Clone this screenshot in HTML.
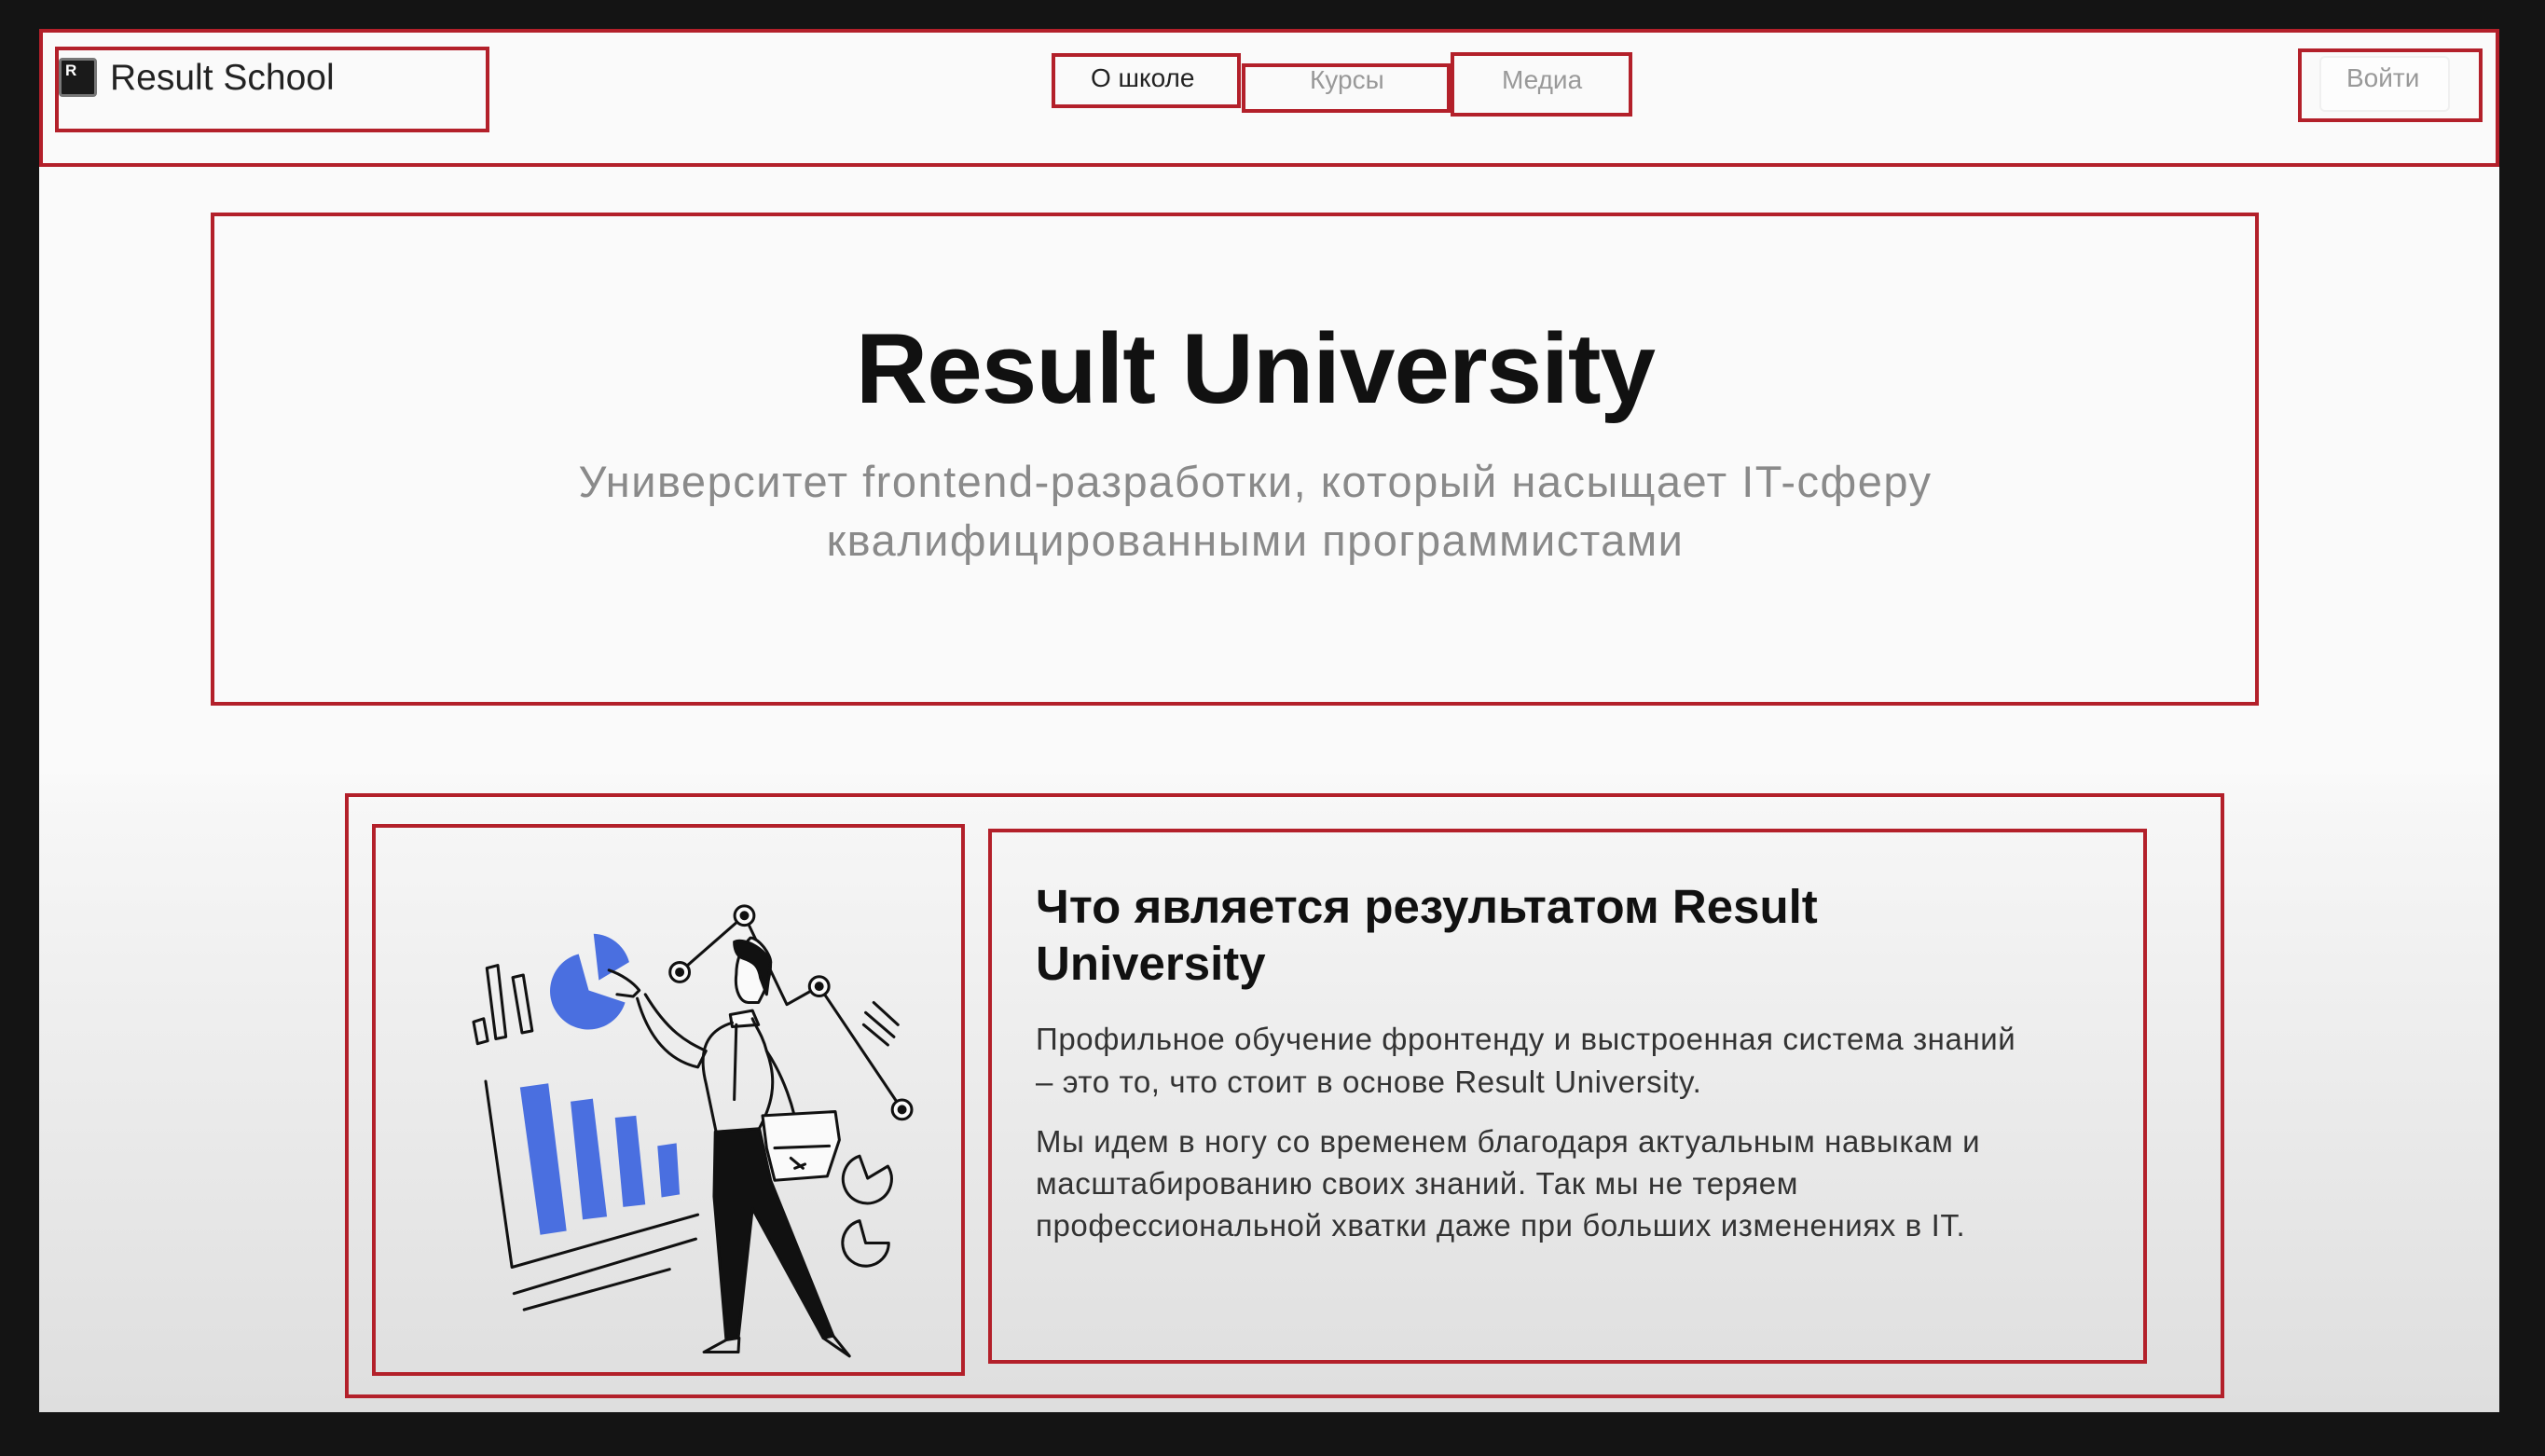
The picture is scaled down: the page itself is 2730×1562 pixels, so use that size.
<!DOCTYPE html>
<html><head><meta charset="utf-8">
<style>
*{margin:0;padding:0;box-sizing:border-box}
html,body{width:2730px;height:1562px;overflow:hidden;background:#141414;font-family:"Liberation Sans","Noto Sans CJK SC",sans-serif}
.page{position:absolute;left:42px;top:31px;width:2639px;height:1484px;background:linear-gradient(#fafafa 0,#fafafa 790px,#f6f6f6 850px,#dedede 1484px)}
.b{position:absolute;border:4px solid #b3202a}
.t{position:absolute;white-space:nowrap}
</style></head><body>
<div class="page"></div>
<!-- header -->
<div class="b" style="left:42px;top:31px;width:2639px;height:148px;border-width:4px"></div>
<div class="b" style="left:59px;top:50px;width:466px;height:92px"></div>
<div style="position:absolute;left:63px;top:62px;width:41px;height:42px;background:#1a1a1a;border:3px solid #777;border-radius:4px"><span style="position:absolute;left:4px;top:1px;color:#fff;font-size:17px;font-weight:bold">R</span></div>
<div class="t" style="left:118px;top:62px;font-size:39px;color:#222">Result School</div>
<div class="b" style="left:1128px;top:57px;width:203px;height:59px"></div>
<div class="b" style="left:1332px;top:68px;width:224px;height:53px"></div>
<div class="b" style="left:1556px;top:56px;width:195px;height:69px"></div>
<div class="t" style="left:1170px;top:68px;font-size:28px;color:#222">О школе</div>
<div class="t" style="left:1405px;top:70px;font-size:28px;color:#999">Курсы</div>
<div class="t" style="left:1611px;top:70px;font-size:28px;color:#999">Медиа</div>
<div class="b" style="left:2465px;top:52px;width:198px;height:79px"></div>
<div style="position:absolute;left:2488px;top:60px;width:140px;height:60px;background:#fdfdfd;border:2px solid #f0f0f0;border-radius:6px"></div>
<div class="t" style="left:2517px;top:68px;font-size:28px;color:#999">Войти</div>
<!-- hero -->
<div class="b" style="left:226px;top:228px;width:2197px;height:529px"></div>
<div class="t" style="left:248px;width:2197px;text-align:center;top:333px;font-size:107px;font-weight:bold;color:#111;letter-spacing:-1px">Result University</div>
<div class="t" style="left:248px;width:2197px;text-align:center;top:485px;font-size:47px;color:#8a8a8a;line-height:63px;letter-spacing:1.5px">Университет frontend-разработки, который насыщает IT-сферу<br>квалифицированными программистами</div>
<!-- section -->
<div class="b" style="left:370px;top:851px;width:2016px;height:649px"></div>
<div class="b" style="left:399px;top:884px;width:636px;height:592px"></div>
<div class="b" style="left:1060px;top:889px;width:1243px;height:574px"></div>
<div class="t" style="left:1111px;top:942px;font-size:51px;font-weight:bold;color:#111;line-height:61px">Что является результатом Result<br>University</div>
<div class="t" style="left:1111px;top:1092px;font-size:33px;color:#333;line-height:46px;letter-spacing:0.6px">Профильное обучение фронтенду и выстроенная система знаний<br>– это то, что стоит в основе Result University.</div>
<div class="t" style="left:1111px;top:1202px;font-size:33px;color:#333;line-height:45px;letter-spacing:0.6px">Мы идем в ногу со временем благодаря актуальным навыкам и<br>масштабированию своих знаний. Так мы не теряем<br>профессиональной хватки даже при больших изменениях в IT.</div>
<!-- illustration -->
<svg style="position:absolute;left:380px;top:850px" width="680" height="640" viewBox="0 0 1568 1476" fill="none" stroke="#111" stroke-width="7" stroke-linecap="round" stroke-linejoin="round">
<path d="M580,490 L555,400 A95,95 0 1 0 670,520 Z" fill="#4a6fe0" stroke="none"/>
<path d="M605,465 L592,350 A95,95 0 0 1 680,420 Z" fill="#4a6fe0" stroke="none"/>
<path d="M295,568 L320,560 L330,615 L305,622 Z M328,435 L355,428 L375,605 L350,610 Z M392,458 L418,452 L440,590 L415,595 Z"/>
<polygon points="410,730 480,720 525,1085 460,1095" fill="#4a6fe0" stroke="none"/>
<polygon points="535,765 590,758 625,1050 565,1057" fill="#4a6fe0" stroke="none"/>
<polygon points="645,805 697,800 720,1020 665,1026" fill="#4a6fe0" stroke="none"/>
<polygon points="750,875 797,868 805,995 760,1002" fill="#4a6fe0" stroke="none"/>
<path d="M325,715 L390,1175 L850,1045 M395,1240 L845,1105 M420,1280 L780,1180"/>
<path d="M805,445 L965,305 L1070,525 L1150,480 L1355,785"/>
<g fill="#fafafa"><circle cx="805" cy="445" r="24"/><circle cx="965" cy="305" r="24"/><circle cx="1150" cy="480" r="24"/><circle cx="1355" cy="785" r="24"/></g>
<g fill="#111"><circle cx="805" cy="445" r="8"/><circle cx="965" cy="305" r="8"/><circle cx="1150" cy="480" r="8"/><circle cx="1355" cy="785" r="8"/></g>
<path d="M1285,520 L1345,575 M1265,545 L1335,605 M1260,575 L1320,625"/>
<path d="M1270,955 L1320,925 A60,60 0 1 1 1250,900 Z"/>
<path d="M1265,1115 L1322,1115 A57,57 0 1 1 1250,1060 Z"/>
<path d="M980,360 C1000,360 1030,400 1030,420 C1030,470 1010,500 1000,520 L975,520 C955,520 940,490 945,450 C945,420 955,385 980,360 Z" fill="#fafafa"/>
<path d="M940,370 C960,360 1010,380 1030,420 L1020,500 L1005,460 C1000,430 990,420 960,410 C945,405 940,385 940,370 Z" fill="#111"/>
<path d="M930,550 L985,540 L1000,575 L935,580 Z" fill="#fafafa"/>
<path d="M700,510 C720,580 760,660 850,680 L870,640 C830,620 780,600 720,500"/>
<path d="M935,570 C870,590 850,640 870,720 L895,840 L1000,835 C1030,780 1050,720 1020,640 C1010,600 990,575 985,560"/>
<path d="M945,575 L940,760"/>
<path d="M1020,640 C1060,700 1090,780 1100,860"/>
<path d="M1010,800 L1190,790 L1200,860 L1170,950 L1040,960 L1020,880 Z" fill="#fafafa"/>
<path d="M1040,880 L1175,875"/>
<path d="M1080,905 L1110,930 M1090,930 L1115,920"/>
<path d="M893,840 L1002,832 L1030,960 L1185,1345 L1160,1350 L985,1030 L950,1350 L920,1355 L890,1000 Z" fill="#111"/>
<path d="M920,1355 L865,1385 L950,1385 L952,1350 M1160,1350 L1225,1395 L1185,1345"/>
<path d="M630,440 C660,450 690,470 705,490 L690,505 L650,500"/>
</svg>
</body></html>
